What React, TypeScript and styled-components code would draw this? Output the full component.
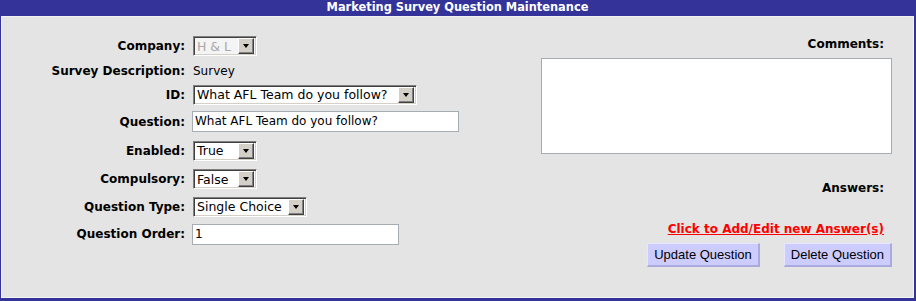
import React from 'react';
import styled, {createGlobalStyle} from 'styled-components';

const GlobalStyle = createGlobalStyle`
  html, body {
    margin: 0;
    padding: 0;
    background: #ffffff;
  }
`;

const UI_FONT = `"DejaVu Sans", Tahoma, sans-serif`;

const Frame = styled.div`
  width: 916px;
  height: 301px;
  box-sizing: border-box;
  background: #333399;
  padding: 0 2px 3px 1px;
  display: flex;
  flex-direction: column;
`;

const TitleBar = styled.div`
  height: 16px;
  line-height: 15px;
  text-align: center;
  color: #ffffff;
  font-family: ${UI_FONT};
  font-weight: bold;
  font-size: 11.4px;
`;

const Body = styled.div`
  flex: 1;
  box-sizing: border-box;
  background: #e4e4e4;
  border: 1px solid #f2f2f2;
  display: flex;
  font-family: ${UI_FONT};
  font-size: 12px;
  color: #000000;
`;

const FormGrid = styled.div`
  display: grid;
  grid-template-columns: 183px auto;
  grid-template-rows: 26px 23px 25px 29px 29px 28px 27px 28px;
  column-gap: 8px;
  align-items: center;
  padding-top: 16px;
  align-self: flex-start;
`;

const Label = styled.div`
  font-weight: bold;
  font-size: 12px;
  text-align: right;
  white-space: nowrap;
`;

const PlainValue = styled.div`
  font-size: 12px;
`;

const SelectBox = styled.div<{$width: number; $disabled?: boolean}>`
  width: ${({$width}) => $width}px;
  height: 20px;
  box-sizing: border-box;
  display: flex;
  align-items: center;
  justify-content: space-between;
  background: ${({$disabled}) => ($disabled ? '#f4f4f4' : '#ffffff')};
  color: ${({$disabled}) => ($disabled ? '#a8a8a8' : '#000000')};
  border-top: 1px solid #808080;
  border-left: 1px solid #808080;
  border-right: 1px solid #ffffff;
  border-bottom: 1px solid #ffffff;
  box-shadow: inset 1px 1px 0 #404040, inset -1px -1px 0 #d4d0c8;
  padding: 2px 2px 2px 3px;
  font-size: 12.5px;
  white-space: nowrap;
`;

const ArrowButton = styled.div`
  width: 16px;
  height: 16px;
  box-sizing: border-box;
  flex: none;
  background: #d4d0c8;
  border-top: 1px solid #ffffff;
  border-left: 1px solid #ffffff;
  border-right: 1px solid #404040;
  border-bottom: 1px solid #404040;
  box-shadow: inset -1px -1px 0 #808080;
  display: flex;
  align-items: center;
  justify-content: center;

  &::after {
    content: '';
    width: 0;
    height: 0;
    border-left: 3.5px solid transparent;
    border-right: 3.5px solid transparent;
    border-top: 4px solid #000000;
  }
`;

const TextInput = styled.div<{$width: number}>`
  width: ${({$width}) => $width}px;
  height: 21px;
  box-sizing: border-box;
  margin-left: -1px;
  background: #ffffff;
  border: 1px solid #a5acb2;
  padding: 0 2px;
  line-height: 19px;
  font-size: 12px;
  white-space: nowrap;
`;

const RightPane = styled.div`
  width: 351px;
  margin-left: auto;
  margin-right: 21px;
  display: flex;
  flex-direction: column;
  align-items: flex-end;
  padding-top: 20px;
`;

const PaneLabel = styled(Label)<{$gap: number}>`
  margin-right: 8px;
  margin-top: ${({$gap}) => $gap}px;
`;

const Comments = styled.div`
  width: 351px;
  height: 96px;
  box-sizing: border-box;
  margin-top: 7px;
  background: #ffffff;
  border: 1px solid #a5acb2;
`;

const AnswerLink = styled.a`
  margin-top: 27px;
  margin-right: 8px;
  color: #ff0000;
  font-weight: bold;
  font-size: 12px;
  text-decoration: underline;
  cursor: pointer;
`;

const ButtonRow = styled.div`
  display: flex;
  gap: 24px;
  margin-top: 7px;
`;

const Button = styled.button`
  height: 24px;
  box-sizing: border-box;
  background: #ccccff;
  border-top: 1px solid #e6e6ff;
  border-left: 1px solid #e6e6ff;
  border-right: 2px solid #aaaadd;
  border-bottom: 2px solid #aaaadd;
  padding: 0 6px;
  font-family: "Liberation Sans", Arial, sans-serif;
  font-size: 13px;
  color: #000000;
`;

function Select({value, width, disabled}: {value: string; width: number; disabled?: boolean}) {
  return (
    <SelectBox $width={width} $disabled={disabled}>
      <span>{value}</span>
      <ArrowButton />
    </SelectBox>
  );
}

export default function App(): JSX.Element {
  return (
    <>
      <GlobalStyle />
      <Frame>
        <TitleBar>Marketing Survey Question Maintenance</TitleBar>
        <Body>
          <FormGrid>
            <Label>Company:</Label>
            <Select value="H &amp; L" width={64} disabled />

            <Label>Survey Description:</Label>
            <PlainValue>Survey</PlainValue>

            <Label>ID:</Label>
            <Select value="What AFL Team do you follow?" width={224} />

            <Label>Question:</Label>
            <TextInput $width={267}>What AFL Team do you follow?</TextInput>

            <Label>Enabled:</Label>
            <Select value="True" width={64} />

            <Label>Compulsory:</Label>
            <Select value="False" width={64} />

            <Label>Question Type:</Label>
            <Select value="Single Choice" width={114} />

            <Label>Question Order:</Label>
            <TextInput $width={207}>1</TextInput>
          </FormGrid>

          <RightPane>
            <PaneLabel $gap={0}>Comments:</PaneLabel>
            <Comments />
            <PaneLabel $gap={27}>Answers:</PaneLabel>
            <AnswerLink>Click to Add/Edit new Answer(s)</AnswerLink>
            <ButtonRow>
              <Button>Update Question</Button>
              <Button>Delete Question</Button>
            </ButtonRow>
          </RightPane>
        </Body>
      </Frame>
    </>
  );
}
